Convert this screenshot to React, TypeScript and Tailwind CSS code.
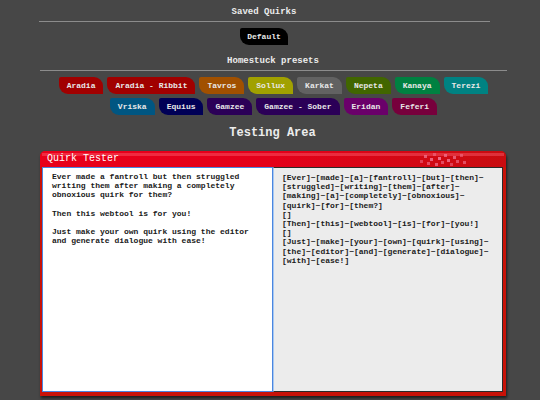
import React from 'react';

const presets: { name: string; color: string }[][] = [
  [
    { name: 'Aradia', color: 'bg-[#a10000]' },
    { name: 'Aradia - Ribbit', color: 'bg-[#a10000]' },
    { name: 'Tavros', color: 'bg-[#a15000]' },
    { name: 'Sollux', color: 'bg-[#a1a100]' },
    { name: 'Karkat', color: 'bg-[#626262]' },
    { name: 'Nepeta', color: 'bg-[#416600]' },
    { name: 'Kanaya', color: 'bg-[#008141]' },
    { name: 'Terezi', color: 'bg-[#008282]' },
  ],
  [
    { name: 'Vriska', color: 'bg-[#005682]' },
    { name: 'Equius', color: 'bg-[#000056]' },
    { name: 'Gamzee', color: 'bg-[#2b0057]' },
    { name: 'Gamzee - Sober', color: 'bg-[#2b0057]' },
    { name: 'Eridan', color: 'bg-[#6a006a]' },
    { name: 'Feferi', color: 'bg-[#77003c]' },
  ],
];

const input = `Ever made a fantroll but then struggled
writing them after making a completely
obnoxious quirk for them?

Then this webtool is for you!

Just make your own quirk using the editor
and generate dialogue with ease!`;

const output = `[Ever]~[made]~[a]~[fantroll]~[but]~[then]~
[struggled]~[writing]~[them]~[after]~
[making]~[a]~[completely]~[obnoxious]~
[quirk]~[for]~[them?]
[]
[Then]~[this]~[webtool]~[is]~[for]~[you!]
[]
[Just]~[make]~[your]~[own]~[quirk]~[using]~
[the]~[editor]~[and]~[generate]~[dialogue]~
[with]~[ease!]`;

// pink pixel sparkle in the tester header
const pixels: [number, number, number][] = [
  [0, 8, 0.5], [4, 3, 0.7], [7, 10, 0.6], [10, 6, 0.8], [13, 1, 0.5], [15, 11, 0.7], [18, 5, 0.9],
  [21, 9, 0.6], [24, 2, 0.7], [27, 7, 0.8], [30, 11, 0.5], [33, 4, 0.7], [36, 8, 0.6], [40, 2, 0.5], [43, 9, 0.6],
];

const QuirkButton: React.FC<{ name: string; color: string }> = ({ name, color }) => (
  <button
    className={`${color} h-[17px] px-2 text-[8px] font-bold leading-none text-[#e8e8e8] rounded-tr-[9px] rounded-bl-[9px] rounded-tl-[2px]`}
  >
    {name}
  </button>
);

export default function App() {
  return (
    <div className="min-h-[400px] bg-[#474747] font-['Liberation_Mono','Courier_New',monospace] text-[#ececec]">
      {/* Saved quirks */}
      <h2 className="pt-[7px] pr-[12px] text-center text-[9px] font-bold leading-[10px]">Saved Quirks</h2>
      <div className="mx-[39px] mt-[4px] h-px w-[451px] bg-[#8c8c8c]" />
      <div className="mt-[6px] flex justify-center pr-[12px]">
        <button className="h-[17px] bg-black px-[7px] text-[8px] font-bold leading-none text-[#e8e8e8] rounded-tr-[9px] rounded-bl-[9px] rounded-tl-[2px]">
          Default
        </button>
      </div>

      {/* Presets */}
      <h2 className="mt-[11px] pl-[6px] text-center text-[9px] font-bold leading-[10px]">Homestuck presets</h2>
      <div className="ml-[40px] mt-[4px] h-px w-[467px] bg-[#8c8c8c]" />
      <div className="ml-[40px] w-[467px] mt-[6px] flex flex-col gap-[4px]">
        {presets.map((row, i) => (
          <div key={i} className="flex justify-center gap-[4px]">
            {row.map(p => (
              <QuirkButton key={p.name} name={p.name} color={p.color} />
            ))}
          </div>
        ))}
      </div>

      {/* Testing area */}
      <h2 className="mt-[11px] pl-[5px] text-center text-[12px] font-bold leading-[14px]">Testing Area</h2>
      <div className="ml-[40px] mt-[11px] flex h-[245px] w-[466px] flex-col rounded-t-[6px] bg-[#c81208] pb-[4px] pl-[2px] pr-[3px] shadow-[1px_2px_3px_rgba(0,0,0,0.6)]">
        <div className="relative -ml-[2px] -mr-[3px] h-[16px] rounded-t-[5px] bg-gradient-to-r from-[#e8001a] via-[#e4001a] to-[#c80c10] pl-[7px] leading-none">
          <div className="absolute inset-x-[2px] top-[2px] h-[3px] bg-[#ff6a7a] opacity-40" />
          <div className="absolute left-[380px] top-[1px] h-[14px] w-[48px]">
            {pixels.map(([x, y, o], i) => (
              <div
                key={i}
                className="absolute h-[3px] w-[3px] bg-[#f27896]"
                style={{ left: x, top: y, opacity: o }}
              />
            ))}
          </div>
          <span className="relative block text-[10px] leading-[15px] text-white">Quirk Tester</span>
        </div>
        <div className="flex min-h-0 flex-1">
          <div className="w-[231px] whitespace-pre border border-[#4a86e0] bg-white pl-[9px] pt-[4px] text-[8px] font-bold leading-[9.2px] text-[#1a1a1a]">
            {input}
          </div>
          <div className="flex-1 whitespace-pre border border-[#2a2a2a] border-l-[#a8c8f0] bg-[#ececec] pl-[8px] pt-[5px] text-[8px] font-bold leading-[9.2px] text-[#1a1a1a]">
            {output}
          </div>
        </div>
      </div>
    </div>
  );
}
